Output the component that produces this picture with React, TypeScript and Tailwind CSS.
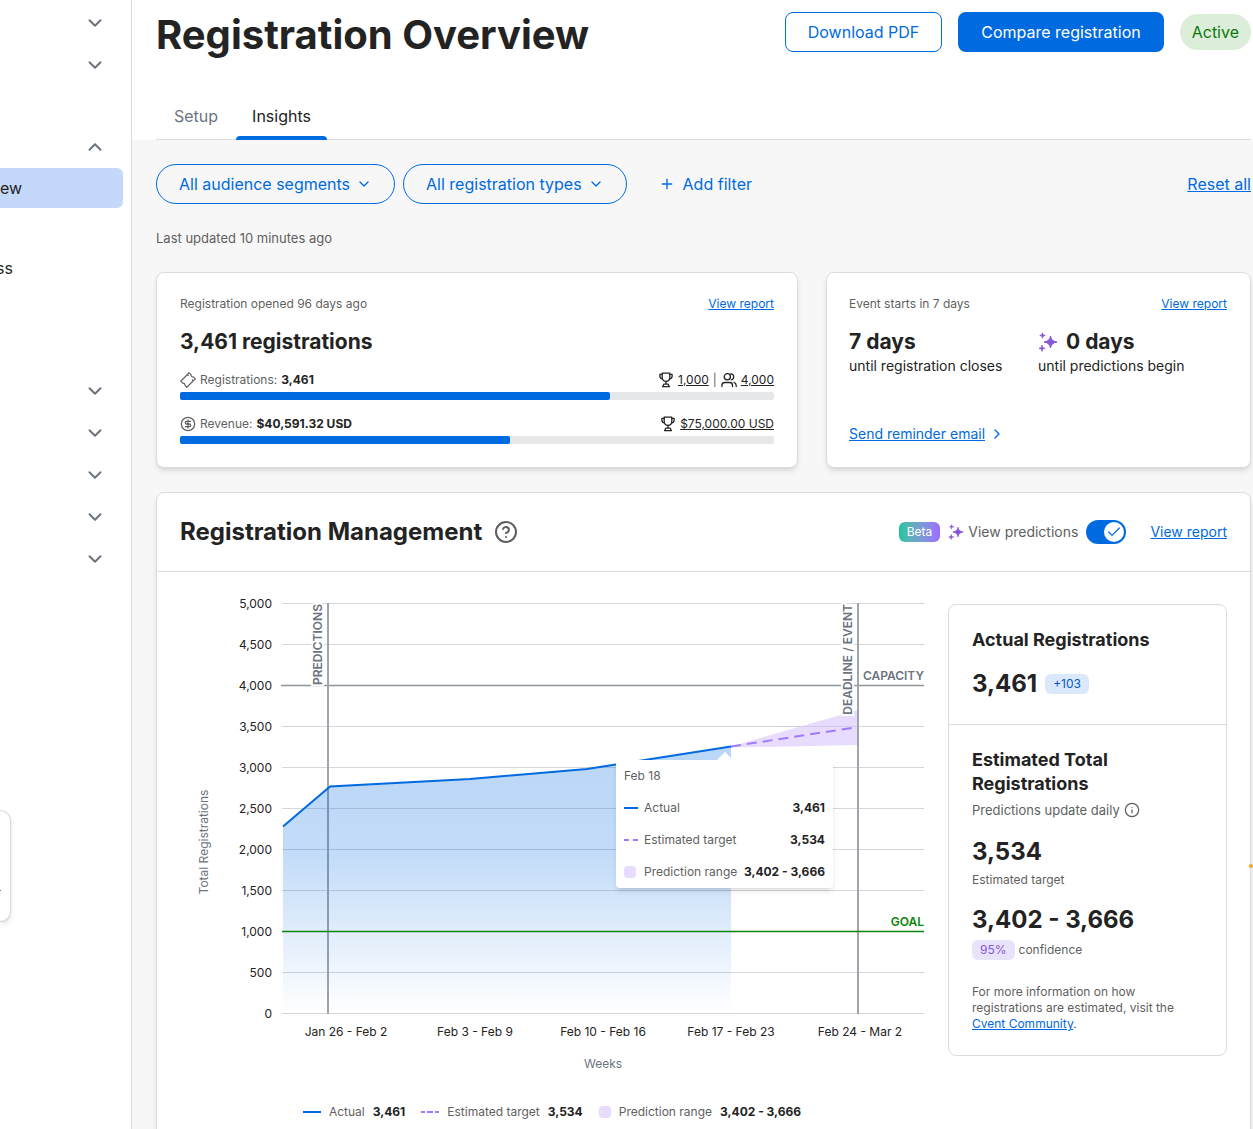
import {
	Check,
	ChevronDown,
	ChevronRight,
	ChevronUp,
	CircleDollarSign,
	CircleHelp,
	Info,
	Plus,
} from "lucide-react";
import { useId, useState } from "react";

const yTicks = [
	"5,000",
	"4,500",
	"4,000",
	"3,500",
	"3,000",
	"2,500",
	"2,000",
	"1,500",
	"1,000",
	"500",
	"0",
];

const weeks = [
	{ label: "Jan 26 - Feb 2", x: 165 },
	{ label: "Feb 3 - Feb 9", x: 294 },
	{ label: "Feb 10 - Feb 16", x: 422 },
	{ label: "Feb 17 - Feb 23", x: 550 },
	{ label: "Feb 24 - Mar 2", x: 679 },
];

const series = [
	{ kind: "actual", label: "Actual", value: "3,461" },
	{ kind: "target", label: "Estimated target", value: "3,534" },
	{ kind: "range", label: "Prediction range", value: "3,402 - 3,666" },
];

const Sparkles = ({ className }: { className: string }) => (
	<svg
		viewBox="0 0 20 20"
		fill="#8556d8"
		stroke="#8556d8"
		className={className}
		aria-hidden="true"
	>
		<path
			d="M12.5 4 C13 7.500 15 9.500 19 10 C15 10.500 13 12.500 12.500 16 C12 12.500 10 10.500 6 10 C10 9.500 12 7.500 12.500 4Z"
			strokeWidth="1"
		/>
		<path
			d="M4.500 0.800 C4.700 2.700 5.200 3.200 7.200 3.500 C5.200 3.800 4.700 4.300 4.500 6.200 C4.300 4.300 3.800 3.800 1.800 3.500 C3.800 3.200 4.300 2.700 4.500 0.800Z"
			strokeWidth="0.9"
		/>
		<path
			d="M4 13.200 C4.200 15.400 4.800 16 7 16.300 C4.800 16.600 4.200 17.200 4 19.300 C3.800 17.200 3.200 16.600 1 16.300 C3.200 16 3.800 15.400 4 13.200Z"
			strokeWidth="0.9"
		/>
	</svg>
);

const TicketIcon = () => (
	<svg
		viewBox="0 0 16 16"
		fill="none"
		stroke="currentColor"
		strokeWidth="1.2"
		strokeLinejoin="round"
		className="size-4 shrink-0"
		aria-hidden="true"
	>
		<path d="M9.200 0.800 L11.100 2.700 C10.700 4 12 5.300 13.300 4.900 L15.300 6.900 L6.800 15.300 L4.900 13.400 C5.300 12 4 10.800 2.700 11.200 L0.700 9.200Z" />
		<path d="M7.600 2.900 L8.500 3.900 M12.200 7.500 L13.100 8.500" />
	</svg>
);

const TrophyIcon = () => (
	<svg
		viewBox="0 0 16 16"
		fill="none"
		stroke="currentColor"
		strokeWidth="1.300"
		strokeLinejoin="round"
		strokeLinecap="round"
		className="size-4 shrink-0"
		aria-hidden="true"
	>
		<path d="M4.200 1.200 H11.800 V5.500 C11.800 7.800 10.200 9.300 8 9.300 C5.800 9.300 4.200 7.800 4.200 5.500Z" />
		<path d="M4.200 2.300 H1.900 V4.200 C1.900 5.700 3 6.700 4.500 6.900 M11.800 2.300 H14.100 V4.200 C14.100 5.700 13 6.700 11.500 6.900" />
		<path d="M8 9.300 V12.200 M5.800 12.200 H10.200 L11.400 14.700 H4.600Z" />
	</svg>
);

const PeopleIcon = () => (
	<svg
		viewBox="0 0 16 16"
		fill="none"
		stroke="currentColor"
		strokeWidth="1.300"
		strokeLinecap="round"
		className="size-4 shrink-0"
		aria-hidden="true"
	>
		<circle cx="6.300" cy="4.800" r="3.100" />
		<path d="M0.900 14.500 V13.300 C0.900 11.600 2.200 10.500 3.900 10.500 H8.500 C10.200 10.500 11.500 11.600 11.500 13.300 V14.500" />
		<path d="M9.500 1.800 C11.400 1.600 12.700 3 12.700 4.700 C12.700 6.300 11.700 7.500 10.300 7.800 M13 10.300 C14.500 10.900 15.200 12 15.200 13.600 V14.500" />
	</svg>
);

const LineSwatch = ({ kind }: { kind: string }) => (
	<svg viewBox="0 0 14 2" className="h-0.5 w-3.5 shrink-0" aria-hidden="true">
		<line
			x2="14"
			y1="1"
			y2="1"
			strokeWidth="2"
			stroke={kind === "actual" ? "#006ae1" : "#a17bfb"}
			strokeDasharray={kind === "actual" ? undefined : "5 4"}
		/>
	</svg>
);

const LegendLine = ({ kind }: { kind: string }) => (
	<svg viewBox="0 0 18 2" className="h-0.5 w-[18px]" aria-hidden="true">
		<line
			x2="18"
			y1="1"
			y2="1"
			strokeWidth="2"
			stroke={kind === "actual" ? "#006ae1" : "#a17bfb"}
			strokeDasharray={kind === "actual" ? undefined : "4 2 6 2"}
		/>
	</svg>
);

const SideRow = ({ open = false }: { open?: boolean }) => (
	<button
		type="button"
		aria-label="Toggle section"
		className="flex h-[42px] w-full items-center justify-end pr-[25px] text-[#6b7480]"
	>
		{open ? (
			<ChevronUp className="size-[22px]" strokeWidth={2.2} />
		) : (
			<ChevronDown className="size-[22px]" strokeWidth={2.2} />
		)}
	</button>
);

const Sidebar = () => (
	<nav className="relative w-[132px] shrink-0 overflow-hidden border-r border-[#dcdcde] bg-white pt-0.5">
		<SideRow />
		<SideRow />
		<div className="h-10" />
		<SideRow open />
		<a
			href="#overview"
			className="mr-2 flex h-10 items-center rounded-r-md bg-[#c4d9f9]"
		>
			ew
		</a>
		<div className="h-10" />
		<a href="#access" className="flex h-10 items-center">
			<span className="-ml-1">ss</span>
		</a>
		<div className="h-[82px]" />
		<SideRow />
		<SideRow />
		<SideRow />
		<SideRow />
		<SideRow />
		{/* Edge of the floating help panel */}
		<div className="absolute top-[810px] left-0 h-28 w-[11px] rounded-r-xl border border-l-0 border-[#dcdcde] bg-white shadow-md">
			<div className="mt-[79px] size-px bg-gray-500" />
		</div>
	</nav>
);

const Progress = ({ label, value }: { label: string; value: number }) => (
	<div
		role="progressbar"
		aria-label={label}
		aria-valuenow={value}
		className="mt-1 h-2 overflow-hidden rounded-xs bg-[#e6e7e9]"
	>
		<div
			className="h-full rounded-r-xs bg-[#006ae1]"
			style={{ width: `${value}%` }}
		/>
	</div>
);

const RegistrationsCard = () => (
	<section className="rounded-lg border border-[#dcdcde] bg-white p-[23px] text-xs shadow-md">
		<div className="flex justify-between text-[#5f5f5f]">
			<span>Registration opened 96 days ago</span>
			<a href="#report" className="text-[#006ae1] underline">
				View report
			</a>
		</div>
		<h2 className="mt-[18px] text-[21px] leading-6 font-bold">
			3,461 registrations
		</h2>
		<div className="mt-[18px] flex items-center justify-between">
			<div className="flex items-center gap-1 text-[#5f5f5f]">
				<TicketIcon />
				Registrations: <b className="text-[#232323]">3,461</b>
			</div>
			<div className="flex items-center gap-1">
				<TrophyIcon />
				<span className="underline">1,000</span>
				<span className="text-[#5f5f5f]">|</span>
				<PeopleIcon />
				<span className="underline">4,000</span>
			</div>
		</div>
		<Progress label="Registrations" value={72.4} />
		<div className="mt-4 flex items-center justify-between">
			<div className="flex items-center gap-1 text-[#5f5f5f]">
				<CircleDollarSign className="size-4" strokeWidth={1.9} />
				Revenue: <b className="text-[#232323]">$40,591.32 USD</b>
			</div>
			<div className="flex items-center gap-1">
				<TrophyIcon />
				<span className="underline">$75,000.00 USD</span>
			</div>
		</div>
		<Progress label="Revenue" value={55.6} />
	</section>
);

const CountdownCard = () => (
	<section className="rounded-lg border border-[#dcdcde] bg-white py-[23px] pr-[23px] pl-[22px] text-sm shadow-md">
		<div className="flex justify-between text-xs text-[#5f5f5f]">
			<span>Event starts in 7 days</span>
			<a href="#report" className="text-[#006ae1] underline">
				View report
			</a>
		</div>
		<div className="mt-[18px] grid grid-cols-2">
			<div>
				<h2 className="text-[21px] leading-6 font-bold">7 days</h2>
				<p className="mt-0.5">until registration closes</p>
			</div>
			<div>
				<h2 className="flex items-center gap-2 text-[21px] leading-6 font-bold">
					<Sparkles className="size-5" />0 days
				</h2>
				<p className="mt-0.5">until predictions begin</p>
			</div>
		</div>
		<a href="#email" className="mt-12 inline-flex items-center gap-1 text-[#006ae1]">
			<span className="underline">Send reminder email</span>
			<ChevronRight className="size-4" />
		</a>
	</section>
);

const Tooltip = () => (
	<div className="absolute top-[164px] left-[436px] w-[217px] rounded bg-white p-2 text-xs text-[#5f5f5f] shadow-md">
		<div className="absolute -top-2 left-[101px] border-x-8 border-b-8 border-x-transparent border-b-white" />
		<div>Feb 18</div>
		{series.map((s) => (
			<div key={s.kind} className="mt-4 flex items-center gap-1.5">
				{s.kind === "range" ? (
					<span className="mr-0.5 size-3 shrink-0 rounded bg-[#e7dcfd]" />
				) : (
					<LineSwatch kind={s.kind} />
				)}
				<span>{s.label}</span>
				<b className="ml-auto text-[#232323]">{s.value}</b>
			</div>
		))}
	</div>
);

const Chart = () => {
	const gradientId = useId();

	return (
		<div className="relative min-w-0 flex-1">
			<svg
				viewBox="-1 0 744 480"
				className="w-full text-xs"
				role="img"
				aria-label="Total registrations by week"
			>
				<defs>
					<linearGradient id={gradientId} x1="0" y1="0" x2="0" y2="1">
						<stop offset="0" stopColor="#006ae1" stopOpacity="0.27" />
						<stop offset="0.4" stopColor="#006ae1" stopOpacity="0.24" />
						<stop offset="1" stopColor="#006ae1" stopOpacity="0" />
					</linearGradient>
				</defs>

				{yTicks.map((tick, i) => (
					<g key={tick}>
						<line x1="101" x2="743" y1={7.5 + i * 41} y2={7.5 + i * 41} stroke="#d5d6d9" />
						<text x="91" y={12 + i * 41} textAnchor="end" fill="#232323">
							{tick}
						</text>
					</g>
				))}
				{weeks.map((w) => (
					<text key={w.label} x={w.x} y="440" textAnchor="middle" fill="#232323">
						{w.label}
					</text>
				))}
				<text x="422" y="472" textAnchor="middle" fill="#6b7480">
					Weeks
				</text>
				<text
					transform="translate(27 246) rotate(-90)"
					textAnchor="middle"
					fill="#6b7480"
				>
					Total Registrations
				</text>

				{/* Prediction range */}
				<path d="M550 150.5 L677 114 V149 L550 151.5Z" fill="#e7dcfd" />
				<path d="M600 130.500 H677" stroke="#d3c9e6" />
				<path
					d="M550 150.5 L677 131"
					stroke="#a17bfb"
					strokeWidth="2"
					strokeDasharray="10 6"
				/>

				{/* Capacity, prediction start and deadline */}
				<line x1="100" x2="744" y1="89.500" y2="89.500" stroke="#8e949c" strokeWidth="1.500" />
				<line x1="147" x2="147" y1="7" y2="418" stroke="#a0a4ab" strokeWidth="2" />
				<line x1="677" x2="677" y1="7" y2="418" stroke="#a0a4ab" strokeWidth="2" />

				{/* Actual */}
				<path
					d="M102 230 L149 190.500 L289 183 L406 173 L550 150.500 V417 H102Z"
					fill={`url(#${gradientId})`}
				/>
				<path
					d="M102 230.500 L149 190.500 L289 183 L406 173 L550 150.500"
					fill="none"
					stroke="#006ae1"
					strokeWidth="2"
				/>
				<line x1="101" x2="744" y1="335.500" y2="335.500" stroke="#0b850b" strokeWidth="1.500" />

				<g fontWeight="600" stroke="white" strokeWidth="4" paintOrder="stroke">
					<text
						transform="translate(141 8) rotate(-90)"
						textAnchor="end"
						fill="#6b7480"
					>
						PREDICTIONS
					</text>
					<text
						transform="translate(671 8) rotate(-90)"
						textAnchor="end"
						fill="#6b7480"
					>
						DEADLINE / EVENT
					</text>
				</g>
				<text x="743" y="84" textAnchor="end" fontWeight="600" fill="#6b7480">
					CAPACITY
				</text>
				<text x="743" y="330" textAnchor="end" fontWeight="600" fill="#0b850b">
					GOAL
				</text>
			</svg>
			<Tooltip />
			<div className="mt-7 flex justify-center gap-4 text-xs text-[#5f5f5f]">
				{series.map((s) => (
					<div key={s.kind} className="flex items-center gap-2">
						{s.kind === "range" ? (
							<span className="size-3 rounded bg-[#e7dcfd]" />
						) : (
							<LegendLine kind={s.kind} />
						)}
						{s.label}
						<b className="text-[#232323]">{s.value}</b>
					</div>
				))}
			</div>
		</div>
	);
};

const SummaryPanel = () => (
	<aside className="mt-2 w-[279px] shrink-0 self-start rounded-lg border border-[#dcdcde]">
		<div className="border-b border-[#dcdcde] px-[23px] pt-[23px] pb-6">
			<h3 className="text-lg leading-6 font-bold">Actual Registrations</h3>
			<div className="mt-4 flex items-center gap-2">
				<span className="text-2xl font-bold">3,461</span>
				<span className="rounded-md bg-[#dbe8fb] px-2 text-xs leading-5 text-[#0058c7]">
					+103
				</span>
			</div>
		</div>
		<div className="p-[23px] text-xs text-[#5f5f5f]">
			<h3 className="text-lg leading-6 font-bold text-[#232323]">
				Estimated Total Registrations
			</h3>
			<div className="mt-1 flex items-center gap-1 text-[13px] leading-5">
				Predictions update daily
				<Info className="size-4" strokeWidth={1.9} />
			</div>
			<div className="mt-4 text-2xl font-bold text-[#232323]">3,534</div>
			<div className="mt-1">Estimated target</div>
			<div className="mt-4 text-2xl font-bold text-[#232323]">3,402 - 3,666</div>
			<div className="mt-1 flex items-center gap-1">
				<span className="rounded-md bg-[#e9e2fb] px-2 leading-5 text-[#8556d8]">
					95%
				</span>
				confidence
			</div>
			<p className="mt-6">
				For more information on how registrations are estimated, visit the{" "}
				<a href="#community" className="text-[#006ae1] underline">
					Cvent Community
				</a>
				.
			</p>
		</div>
	</aside>
);

const Management = () => {
	const [predictions, setPredictions] = useState(true);
	const toggleId = useId();

	return (
		<section className="mt-6 rounded-lg border border-[#dcdcde] bg-white pb-6 shadow-md">
			<div className="flex h-[79px] items-center border-b border-[#dcdcde] px-[23px] text-sm">
				<h2 className="text-2xl font-bold">Registration Management</h2>
				<button type="button" aria-label="Help" className="ml-3 text-[#5f5f5f]">
					<CircleHelp className="size-6" />
				</button>
				<span className="ml-auto rounded-md bg-linear-to-r from-[#0fc59b] to-[#9c6bff] px-2 text-xs leading-5 text-white">
					Beta
				</span>
				<Sparkles className="ml-2 size-4" />
				<label htmlFor={toggleId} className="ml-1 text-[#5f5f5f]">
					View predictions
				</label>
				<span className="relative ml-2 h-6 w-10">
					<input
						id={toggleId}
						type="checkbox"
						role="switch"
						checked={predictions}
						onChange={(e) => setPredictions(e.target.checked)}
						className="peer block h-6 w-10 appearance-none rounded-full bg-gray-400 checked:bg-[#006ae1]"
					/>
					<span className="pointer-events-none absolute top-0.5 left-0.5 flex size-5 items-center justify-center rounded-full bg-white text-[#006ae1] peer-checked:left-[18px]">
						<Check className="size-4" strokeWidth={1.8} />
					</span>
				</span>
				<a href="#report" className="ml-6 text-[#006ae1] underline">
					View report
				</a>
			</div>
			<div className="flex gap-6 px-[23px] pt-6">
				<Chart />
				<SummaryPanel />
			</div>
		</section>
	);
};

const App = () => (
	<div className="flex h-screen overflow-hidden bg-[#f7f7f7] font-[Inter,Roboto,sans-serif] text-[#232323]">
		<Sidebar />
		<main className="relative min-w-0 flex-1">
			<header className="bg-white pt-3 pr-0.5 pl-6">
				<div className="flex h-10 items-center gap-4">
					<h1 className="mr-auto pt-1.5 text-[40px] leading-10 font-bold">
						Registration Overview
					</h1>
					<button
						type="button"
						className="h-10 rounded-lg border border-[#006ae1] px-[22px] text-[#006ae1]"
					>
						Download PDF
					</button>
					<button type="button" className="h-10 rounded-lg bg-[#006ae1] px-[23px] text-white">
						Compare registration
					</button>
					<span className="flex h-9 items-center rounded-full bg-[#dcedda] px-3 text-[#0b7a0b]">
						Active
					</span>
				</div>
				<nav className="mt-10 flex gap-0.5 border-b border-[#dcdcde] pl-0.5">
					<a href="#setup" className="px-4 pt-3 pb-[11px] text-[#6b7480]">
						Setup
					</a>
					<a href="#insights" className="relative px-4 pt-3 pb-[11px]">
						Insights
						<span className="absolute inset-x-0 -bottom-px h-1 rounded-t bg-[#006ae1]" />
					</a>
				</nav>
			</header>

			<div className="pt-6 pr-0.5 pl-6">
				<div className="flex items-center gap-2 text-[#006ae1]">
					<button
						type="button"
						className="flex h-10 items-center gap-1.5 rounded-full border border-[#006ae1] px-[22px]"
					>
						All audience segments
						<ChevronDown className="size-4" />
					</button>
					<button
						type="button"
						className="flex h-10 items-center gap-1.5 rounded-full border border-[#006ae1] px-[22px]"
					>
						All registration types
						<ChevronDown className="size-4" />
					</button>
					<button type="button" className="flex h-10 items-center gap-2 px-6">
						<Plus className="size-4" />
						Add filter
					</button>
					<a href="#reset" className="ml-auto underline">
						Reset all
					</a>
				</div>
				<p className="mt-6 text-[13px] leading-5 text-[#5f5f5f]">
					Last updated 10 minutes ago
				</p>
				<div className="mt-6 grid grid-cols-[minmax(0,642fr)_minmax(0,425fr)] gap-7">
					<RegistrationsCard />
					<CountdownCard />
				</div>
				<Management />
			</div>
			<span className="absolute top-[864px] right-0 size-1 rounded-full bg-[#f9a51a]" />
		</main>
	</div>
);

export default App;
